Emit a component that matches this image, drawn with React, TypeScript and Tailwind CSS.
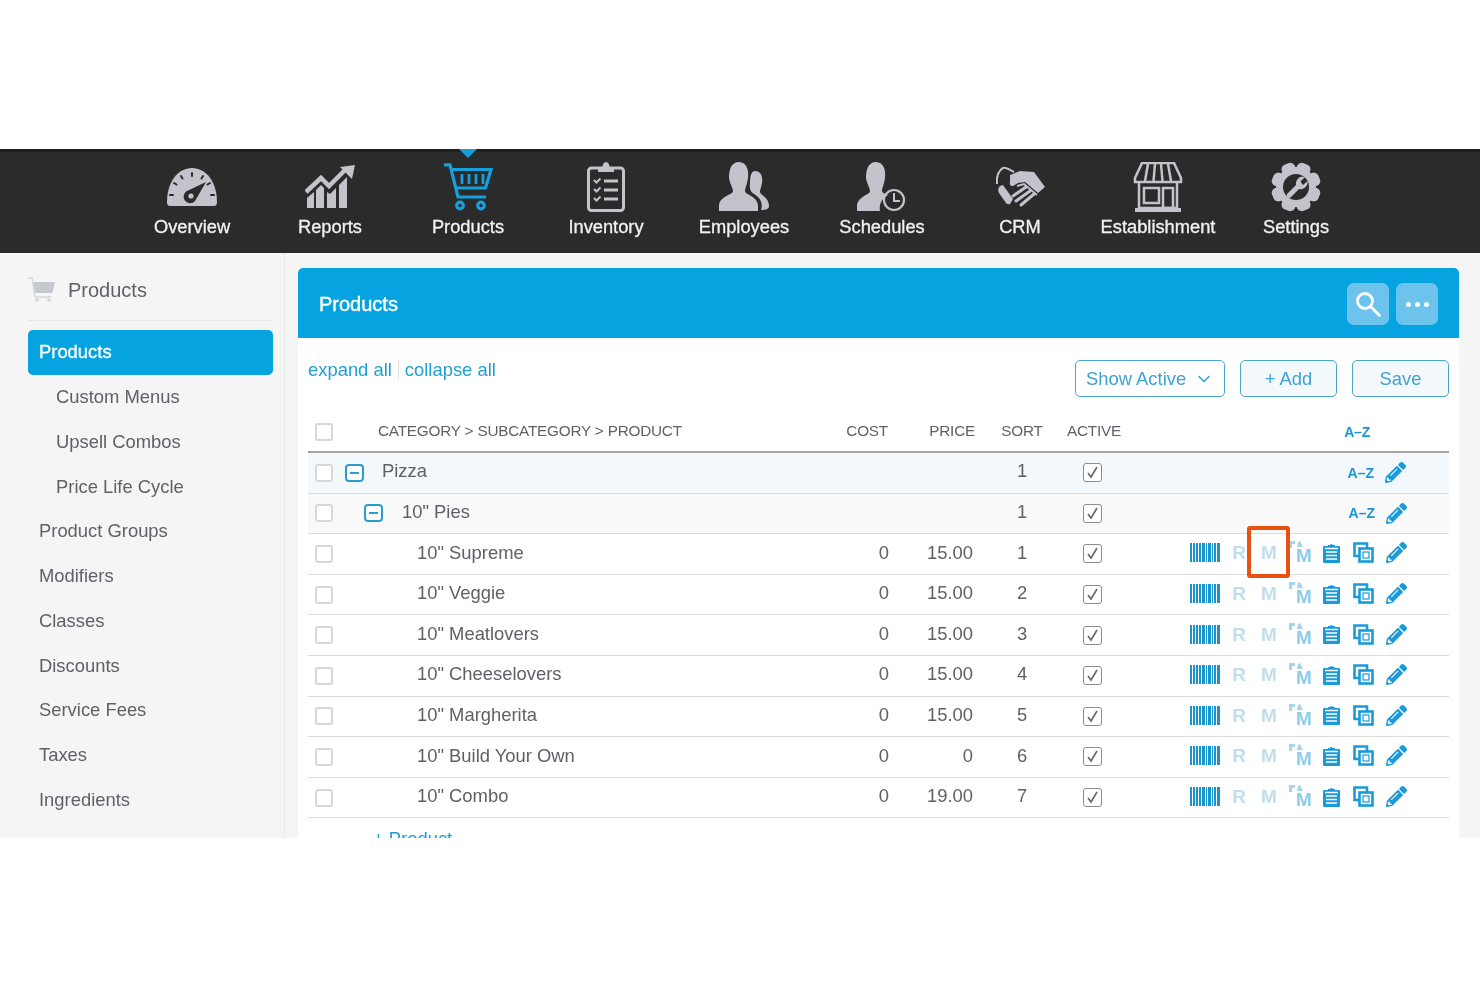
import React from "react";
import { ChevronDown } from "lucide-react";
import { FaPencilAlt } from "react-icons/fa";

const L = "#c2c3cb";
const D = "#2b2b2b";

const Gauge = () => (
  <svg width="50" height="38" viewBox="0 0 50 38">
    <path d="M3 38Q0 38 0 34C0 14 11 0 25 0C39 0 50 14 50 34Q50 38 47 38Z" fill={L} />
    <g stroke={D} strokeWidth="2" strokeLinecap="round">
      <path d="M25 5v3M14 8l1.500 2.500M36 8l-1.500 2.500M7 15l2.500 1.500M43 15l-2.500 1.500M3 27h3M44 27h3" />
    </g>
    <path d="M39 14L28 33A6.500 6.500 0 1 1 20 23Z" fill={D} />
    <circle cx="24" cy="28" r="2.600" fill={L} />
  </svg>
);
const Chart = () => (
  <svg width="50" height="44" viewBox="0 0 50 44">
    <g fill={L}>
      <path d="M2 43V33L9 27V43Z" />
      <path d="M11 43V25L16 20L19 23V43Z" />
      <path d="M22 43V27L25 29L31 23V43Z" />
      <path d="M34 43V20L42 12V43Z" />
    </g>
    <path d="M1 27L16 13L24 21L41 4" fill="none" stroke={L} strokeWidth="4.500" />
    <path d="M35 2L50 0L47 14Z" fill={L} />
  </svg>
);
const Cart = () => (
  <svg width="50" height="48" viewBox="0 0 50 48" fill="none" stroke="#159fdc" strokeWidth="3.200">
    <path d="M1 1.800H7L15 34H43" />
    <path d="M8 6.500H48L42.500 25H13" />
    <path d="M19 11V21M26 11V21M33 11V21M40 11V21" strokeWidth="2.800" />
    <circle cx="17" cy="42.500" r="3.300" />
    <circle cx="38" cy="42.500" r="3.300" />
  </svg>
);
const Inventory = () => (
  <svg width="38" height="50" viewBox="0 0 38 50" fill="none">
    <rect x="1.500" y="6" width="35" height="42.500" rx="3" stroke={L} strokeWidth="3" />
    <path d="M11 10V6H15Q16 0 19 0Q22 0 23 6H27V10Z" fill={L} />
    <path d="M7 18l2.500 2.500 4-4M7 27l2.500 2.500 4-4M7 36l2.500 2.500 4-4" stroke={L} strokeWidth="2" />
    <path d="M17 19H31M17 28H31M17 37H31" stroke={L} strokeWidth="3" />
  </svg>
);
const Employees = () => (
  <svg width="50" height="50" viewBox="0 0 50 50" fill={L}>
    <path d="M36 9C42 9 44 15 43 21C42 26 41 28 41 30C41 33 50 35 50 44C50 47 47 48 42 48C44 42 42 36 35 32C33 31 30 28 31 22C31 15 32 9 36 9Z" />
    <path d="M20 0C28 0 30 9 29 16C28 23 26 26 26 29C26 33 39 34 39 44V49H0V44C0 34 14 33 14 29C14 26 11 22 10 16C10 8 12 0 20 0Z" />
  </svg>
);
const Schedules = () => (
  <svg width="50" height="50" viewBox="0 0 50 50">
    <path d="M19 0C27 0 29 9 28 16C27 23 25 26 25 29C25 31 29 32 31 33C24 37 22 43 23 49H0V45C0 34 13 33 13 29C13 26 10 22 9 16C9 8 11 0 19 0Z" fill={L} />
    <circle cx="37" cy="38" r="10" fill="none" stroke={L} strokeWidth="2.200" />
    <path d="M37 31V39H43" fill="none" stroke={L} strokeWidth="2" />
  </svg>
);
const Hands = () => (
  <svg width="50" height="42" viewBox="0 0 50 42">
    <path d="M2 18C1 10 4 4 8 2C11 1 15 4 19 6" fill="none" stroke={L} strokeWidth="2" />
    <path d="M5 20L8 19L18 33L15 38Q13 39 11 37L4 27Q2 23 5 20Z" fill={L} />
    <path d="M15 9L25 5L39 6L50 21L43 27L30 16L23 17L18 20Q14 20 15 16Z" fill={L} />
    <path d="M22 20L29 18L42 29" fill="none" stroke={L} strokeWidth="2" />
    <g stroke={L} strokeWidth="3" strokeLinecap="round">
      <path d="M18 30L31 21" />
      <path d="M21 35L35 25" />
      <path d="M26 39L39 28" />
    </g>
  </svg>
);
const Store = () => (
  <svg width="50" height="50" viewBox="0 0 50 50" fill="none" stroke={L}>
    <path d="M9 1H41L48 16V20H2V16Z" strokeWidth="2.500" />
    <path d="M15 2L12 19M22 2L20.500 19M28 2L29.500 19M35 2L38 19" strokeWidth="2.500" />
    <path d="M6 21V46H44V21" strokeWidth="2.500" />
    <rect x="11" y="26" width="15" height="15" strokeWidth="2.500" />
    <rect x="30" y="26" width="10" height="20" strokeWidth="2.500" />
    <path d="M2 48H48" strokeWidth="4" />
  </svg>
);
const Gear = () => (
  <svg width="50" height="52" viewBox="0 0 50 52">
    <g fill={L}>
      {[22.5, 67.5, 112.5, 157.5, 202.5, 247.5, 292.5, 337.5].map((a) => (
        <rect key={a} x="18" y="1" width="14" height="14" rx="5" transform={`rotate(${a} 25 26)`} />
      ))}
      <circle cx="25" cy="26" r="20" />
    </g>
    <circle cx="25" cy="26" r="13" fill={D} />
    <path d="M16 33L25 24A7 7 0 0 1 34 16L29.500 20.500L32 24L36.500 20A7 7 0 0 1 28 28L19 37Q15 37 16 33Z" fill={L} />
  </svg>
);

const nav: [string, React.ReactNode][] = [
  ["Overview", <Gauge />],
  ["Reports", <Chart />],
  ["Products", <Cart />],
  ["Inventory", <Inventory />],
  ["Employees", <Employees />],
  ["Schedules", <Schedules />],
  ["CRM", <Hands />],
  ["Establishment", <Store />],
  ["Settings", <Gear />],
];

const side: [string, number][] = [
  ["Custom Menus", 1],
  ["Upsell Combos", 1],
  ["Price Life Cycle", 1],
  ["Product Groups", 0],
  ["Modifiers", 0],
  ["Classes", 0],
  ["Discounts", 0],
  ["Service Fees", 0],
  ["Taxes", 0],
  ["Ingredients", 0],
  ["Ingredient Groups", 0],
];

const products: [string, string, string][] = [
  ['10" Supreme', "15.00", "1"],
  ['10" Veggie', "15.00", "2"],
  ['10" Meatlovers', "15.00", "3"],
  ['10" Cheeselovers', "15.00", "4"],
  ['10" Margherita', "15.00", "5"],
  ['10" Build Your Own', "0", "6"],
  ['10" Combo', "19.00", "7"],
];

const grid = "grid grid-cols-[32px_509px_40px_86px_94px_48px_1fr] items-center";

const Box = () => (
  <div className="ml-[7px] h-[18px] w-[18px] rounded-[3px] border-2 border-[#d8d8d8] bg-white" />
);
const Check = () => (
  <div className="flex justify-center pr-[1px]">
    <div className="flex h-[19px] w-[19px] items-center justify-center rounded-[3px] border-[1.5px] border-[#8c8c8c] bg-white">
      <svg width="13" height="13" viewBox="0 0 13 13" fill="none" stroke="#666" strokeWidth="1.600">
        <path d="M2 7L5 11L11 1" />
      </svg>
    </div>
  </div>
);
const Tree = () => (
  <div className="flex h-[18px] w-[19px] shrink-0 items-center justify-center rounded-[4px] border-2 border-[#2a9dd0] bg-white">
    <div className="h-[2px] w-[9px] bg-[#2a9dd0]" />
  </div>
);
const Az = () => <span className="text-[14px] leading-none font-bold text-[#1a95d2]">A–Z</span>;
const Pencil = () => <FaPencilAlt size={21} color="#1a9ad9" />;

const Barcode = () => (
  <svg width="30" height="19" viewBox="0 0 30 19" fill="#1b93cc">
    {[[0, 2], [3, 2], [6, 2], [9, 2], [12, 3], [16, 1], [18, 3], [22, 1], [24, 2], [27, 3]].map(([x, w]) => (
      <rect key={x} x={x} y="0" width={w} height="19" />
    ))}
  </svg>
);
const Clipboard = () => (
  <svg width="17" height="20" viewBox="0 0 17 20">
    <path d="M1 3H5V2H7Q8.500 0 10 2H12V3H16Q17 3 17 4V19Q17 20 16 20H1Q0 20 0 19V4Q0 3 1 3Z" fill="#1a9ad9" />
    <path d="M2 5.500H15M3 9H14M3 12.500H14M3 16H14" stroke="#fff" strokeWidth="1.500" />
  </svg>
);
const Copy = () => (
  <svg width="21" height="21" viewBox="0 0 21 21" fill="none" stroke="#1a9ad9" strokeWidth="2.600">
    <path d="M6 14H1.500V1.500H14V6" />
    <rect x="6.500" y="6.500" width="13" height="13" />
    <rect x="10" y="10" width="6" height="6" strokeWidth="1.200" />
  </svg>
);
const Marks = () => (
  <svg width="14" height="7" viewBox="0 0 14 7" fill="#a5d4ec">
    <path d="M0 0H3V7H0Z" />
    <path d="M3 0H6V3H3Z" />
    <path d="M9 1L11 0L14 6H8Z" />
  </svg>
);

const Actions = ({ marked }: { marked?: boolean }) => (
  <div className="flex items-center pb-[2px] pl-[73px]">
    <div className="w-[30px]">
      <Barcode />
    </div>
    <div className="ml-[4px] w-[30px] text-center text-[19px] leading-none font-bold text-[#c0deef]">R</div>
    <div className="relative w-[30px] text-center text-[19px] leading-none font-bold text-[#c0deef]">
      M
      {marked && (
        <div className="absolute top-[-17px] left-[-7px] h-[52px] w-[43px] rounded-[3px] border-[4px] border-[#e8510f]" />
      )}
    </div>
    <div className="flex h-[23px] w-[30px] flex-col pl-[5px] font-bold text-[#8fcbea]">
      <Marks />
      <span className="ml-[7px] text-[19px] leading-[16px]">M</span>
    </div>
    <div className="ml-[2px] flex w-[30px] justify-center">
      <Clipboard />
    </div>
    <div className="ml-[1px] flex w-[32px] justify-center">
      <Copy />
    </div>
    <div className="ml-[2px] flex w-[30px] justify-center">
      <Pencil />
    </div>
  </div>
);

const Btn = ({ children, w }: { children: React.ReactNode; w: string }) => (
  <div className={`${w} flex h-[37px] items-center justify-center rounded-[5px] border-[1.5px] border-[#4aa6cf] bg-[#f3f9fc] text-[#3ea2d2]`}>
    {children}
  </div>
);

export default function App() {
  return (
    <div className="h-[987px] overflow-hidden bg-white pt-[149px] font-['Liberation_Sans',Arial,sans-serif] text-[18.400px] text-[#5f6166] blur-[0.5px]">
      <header className="flex h-[104px] justify-center border-t-[3px] border-[#1f1f1f] bg-[#2b2b2b] pl-[8px]">
        {nav.map(([label, icon], i) => (
          <div key={label} className="relative flex w-[138px] flex-col items-center">
            {i === 2 && (
              <div className="absolute top-[-3px] h-0 w-0 border-x-[9px] border-t-[9px] border-x-transparent border-t-[#159fdc]" />
            )}
            <div className="flex h-[65px] items-center justify-center pt-[5px]">{icon}</div>
            <div className="text-[18.300px] leading-[20px] text-[#f2f2f2] [-webkit-text-stroke:0.3px_#f2f2f2]">{label}</div>
          </div>
        ))}
      </header>

      <div className="flex h-[585px] overflow-hidden bg-[#f5f5f5]">
        <aside className="h-full w-[285px] shrink-0 border-r border-[#e9e9e9] px-[28px] pr-[11px]">
          <div className="flex h-[68px] items-center gap-[13px] border-b border-[#e6e6e6] pt-[6px]">
            <svg width="27" height="25" viewBox="0 0 27 25">
              <path d="M0 1H4L7 20H23" fill="none" stroke="#d5d6dc" strokeWidth="1.500" />
              <path d="M5.500 5H27L24.500 16H7Z" fill="#c6c8d0" />
              <circle cx="9" cy="23" r="1.800" fill="#d5d6dc" />
              <circle cx="21" cy="23" r="1.800" fill="#d5d6dc" />
            </svg>
            <span className="text-[20px]">Products</span>
          </div>
          <div className="mt-[9px] flex h-[44.500px] items-center rounded-[5px] bg-[#05a3e0] pl-[11px] text-white [-webkit-text-stroke:0.3px_#fff]">
            Products
          </div>
          {side.map(([t, sub]) => (
            <div key={t} className={`flex h-[44.750px] items-center ${sub ? "pl-[28px]" : "pl-[11px]"}`}>
              {t}
            </div>
          ))}
        </aside>

        <main className="min-w-0 flex-1 pt-[15px] pr-[21px] pl-[13px]">
          <div className="h-full bg-white">
            <div className="flex h-[70px] items-center justify-between rounded-t-[5px] bg-[#05a3e0] px-[21px] pt-[2px]">
              <span className="text-[20px] text-white [-webkit-text-stroke:0.4px_#fff]">Products</span>
              <div className="flex gap-[7px]">
                <div className="flex h-[42px] w-[42px] items-center justify-center rounded-[7px] bg-[#6cc4ec]">
                  <svg width="26" height="26" viewBox="0 0 26 26" fill="none" stroke="#fff" strokeWidth="2.800" strokeLinecap="round">
                    <circle cx="10" cy="10" r="7.500" />
                    <path d="M16 16L24.500 24.500" />
                  </svg>
                </div>
                <div className="flex h-[42px] w-[42px] items-center justify-center gap-[4px] rounded-[7px] bg-[#6cc4ec]">
                  <span className="h-[5px] w-[5px] rounded-full bg-white" />
                  <span className="h-[5px] w-[5px] rounded-full bg-white" />
                  <span className="h-[5px] w-[5px] rounded-full bg-white" />
                </div>
              </div>
            </div>

            <div className="px-[10px]">
              <div className="flex h-[73px] justify-between pt-[22px]">
                <div className="flex h-[20px] items-center text-[#1f9fd6]">
                  expand all
                  <span className="mx-[6px] h-[18px] w-px bg-[#dcdcdc]" />
                  collapse all
                </div>
                <div className="flex gap-[15px]">
                  <div className="flex h-[37px] w-[150px] items-center gap-[8px] rounded-[5px] border-[1.5px] border-[#4aa6cf] pl-[10px] text-[#3ea2d2]">
                    Show Active
                    <ChevronDown size={20} />
                  </div>
                  <Btn w="w-[97px]">+ Add</Btn>
                  <Btn w="w-[97px]">Save</Btn>
                </div>
              </div>

              <div className={`${grid} h-[42px] border-b-2 border-[#a3a3a3] pt-[1px] text-[15.300px] tracking-[-0.2px]`}>
                <Box />
                <div className="pl-[38px]">CATEGORY &gt; SUBCATEGORY &gt; PRODUCT</div>
                <div className="flex justify-end pr-[1px]">COST</div>
                <div className="text-right">PRICE</div>
                <div className="text-center">SORT</div>
                <div className="-ml-[2px]">ACTIVE</div>
                <div className="flex justify-end pr-[79px]">
                  <Az />
                </div>
              </div>

              <div className={`${grid} h-[40.600px] border-b border-[#dcdcdc] bg-[#f2f8fb]`}>
                <Box />
                <div className="flex items-center pl-[5px]">
                  <Tree />
                  <span className="ml-[18px] pb-[3px]">Pizza</span>
                </div>
                <div />
                <div />
                <div className="pb-[3px] text-center">1</div>
                <Check />
                <div className="flex items-center justify-end gap-[11px] pr-[43px]">
                  <Az />
                  <Pencil />
                </div>
              </div>
              <div className={`${grid} h-[40.600px] border-b border-[#dcdcdc] bg-[#f9f9f9]`}>
                <Box />
                <div className="flex items-center pl-[24px]">
                  <Tree />
                  <span className="ml-[19px] pb-[3px]">10" Pies</span>
                </div>
                <div />
                <div />
                <div className="pb-[3px] text-center">1</div>
                <Check />
                <div className="flex items-center justify-end gap-[11px] pr-[42px]">
                  <Az />
                  <Pencil />
                </div>
              </div>
              {products.map(([n, p, s], i) => (
                <div key={n} className={`${grid} h-[40.600px] border-b border-[#dcdcdc]`}>
                  <Box />
                  <div className="pb-[3px] pl-[77px]">{n}</div>
                  <div className="pb-[3px] text-right">0</div>
                  <div className="pr-[2px] pb-[3px] text-right">{p}</div>
                  <div className="pb-[3px] text-center">{s}</div>
                  <Check />
                  <Actions marked={i === 0} />
                </div>
              ))}
              <div className="pt-[7px] pl-[65px] text-[#1f9fd6]">+ Product</div>
            </div>
          </div>
        </main>
      </div>
    </div>
  );
}
